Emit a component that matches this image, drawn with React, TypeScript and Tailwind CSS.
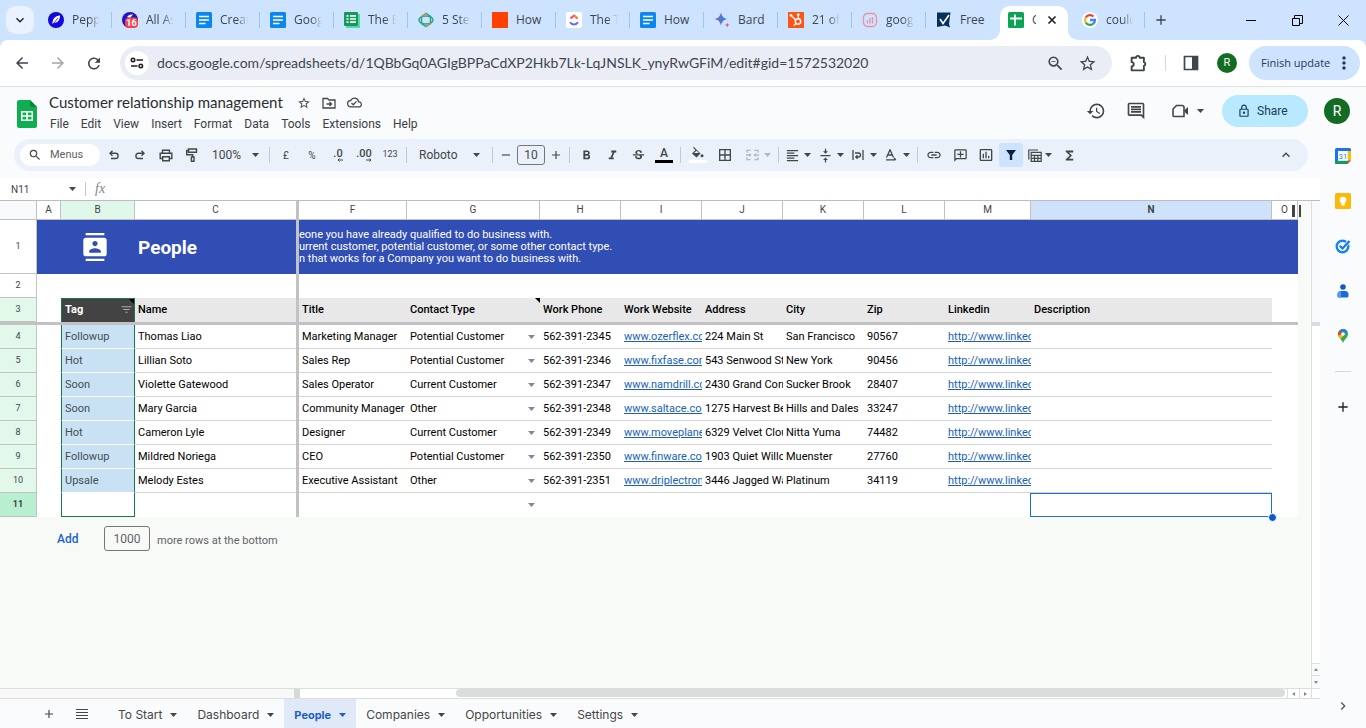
import React from "react";
import {
  MdAdd,
  MdArrowBack,
  MdArrowForward,
  MdBorderAll,
  MdChevronRight,
  MdContacts,
  MdFilterList,
  MdFormatAlignLeft,
  MdFormatBold,
  MdFormatItalic,
  MdFunctions,
  MdHistory,
  MdInsertChartOutlined,
  MdKeyboardArrowDown,
  MdKeyboardArrowUp,
  MdLink,
  MdMoreVert,
  MdOutlineAddComment,
  MdOutlineCloudDone,
  MdOutlineComment,
  MdOutlineLock,
  MdRefresh,
  MdRemove,
  MdSearch,
  MdStarBorder,
  MdStrikethroughS,
  MdVerticalAlignCenter,
  MdZoomOut,
} from "react-icons/md";

type Kids = { children?: React.ReactNode };

/* ---------- favicons ---------- */

const DocsIcon = () => (
  <svg viewBox="0 0 16 16" className="size-4 shrink-0">
    <rect width="16" height="16" rx="1.5" fill="#0b86f0" />
    <path d="M3 4.500h10M3 8h10M3 11.500h6.500" stroke="#fff" strokeWidth="1.600" />
  </svg>
);
const PepperIcon = () => (
  <svg viewBox="0 0 16 16" className="size-4 shrink-0">
    <circle cx="8" cy="8" r="8" fill="#1206e0" />
    <path d="M4.500 12.500C4.200 7 7 3.500 12 3.500 12.200 8 9.500 11 5.800 11L4.500 12.500z" fill="#fff" />
    <path d="M5 12 10 6" stroke="#1206e0" strokeWidth=".8" />
  </svg>
);
const AllIcon = () => (
  <svg viewBox="0 0 16 16" className="size-4 shrink-0">
    <circle cx="8" cy="8" r="8" fill="#2312c8" />
    <path d="M5 5C7 2.500 9 2.500 11 2.500L8 6z" fill="#fff" />
    <rect x="3" y="5.500" width="13" height="10.500" rx="4" fill="#f0454c" />
    <text x="9.500" y="14" fontSize="9" fontWeight="700" fill="#fff" textAnchor="middle" fontFamily="Roboto, sans-serif">16</text>
  </svg>
);
const TableIcon = () => (
  <svg viewBox="0 0 16 16" className="size-4 shrink-0">
    <rect x="2" y="2" width="14" height="14" fill="#4fdc9c" />
    <rect width="14" height="14" rx="1" fill="#149a5a" />
    <path d="M2.500 3.800h2M6 3.800h6M2.500 7h2M6 7h6M2.500 10.200h2M6 10.200h6" stroke="#fff" strokeWidth="1.700" />
  </svg>
);
const KnotIcon = () => (
  <svg viewBox="0 0 16 16" className="size-4 shrink-0" fill="none" strokeWidth="1.500">
    <ellipse cx="8" cy="8" rx="7" ry="4" stroke="#2ba58b" />
    <path d="M3.500 4.500 8 1.500l4.500 3v7L8 14.500l-4.500-3z" stroke="#2ba58b" />
    <path d="M3.500 4.500 8 1.500M12.500 11.500 8 14.500" stroke="#e58a3c" />
  </svg>
);
const OrangeIcon = () => (
  <svg viewBox="0 0 16 16" className="size-4 shrink-0"><rect width="16" height="16" fill="#ff4000" /></svg>
);
const ClickUpIcon = () => (
  <svg viewBox="0 0 16 16" className="size-4 shrink-0" fill="none">
    <rect width="16" height="16" rx="2" fill="#fff" />
    <path d="M4.500 6.500 8 3.500l3.500 3" stroke="#f0437f" strokeWidth="2" />
    <path d="M8 3.500l3.500 3" stroke="#fb8a2e" strokeWidth="2" />
    <path d="M4 10.200c2 3 6 3 8 0" stroke="#5c6cf5" strokeWidth="2" />
  </svg>
);
const BardIcon = () => (
  <svg viewBox="0 0 16 16" className="size-4 shrink-0">
    <path d="M7 .500C7.800 4.500 9.500 6.200 13.500 7 9.500 7.800 7.800 9.500 7 13.500 6.200 9.500 4.500 7.800.500 7 4.500 6.200 6.200 4.500 7 .500z" fill="#3c7fe0" />
    <path d="M7 .500V13.500C6.200 9.500 4.500 7.800.500 7 4.500 6.200 6.200 4.500 7 .500z" fill="#a35db0" opacity=".6" />
    <path d="M13.300 10.500c.3 1.700 1 2.300 2.700 2.600-1.700.3-2.400 1-2.700 2.700-.3-1.700-1-2.400-2.700-2.700 1.700-.3 2.400-.9 2.700-2.600z" fill="#d9618b" />
  </svg>
);
const HubIcon = () => (
  <svg viewBox="0 0 16 16" className="size-4 shrink-0" fill="none" stroke="#fff">
    <rect width="16" height="16" fill="#ff5416" stroke="none" />
    <circle cx="10" cy="9.500" r="2.700" strokeWidth="1.500" />
    <path d="M10.300 6.500V3M7.800 8 3 3.500M8 11.500l-2.200 2.200" strokeWidth="1.200" />
    <circle cx="10.300" cy="2.700" r="1" fill="#fff" />
    <circle cx="3" cy="3.300" r="1" fill="#fff" />
  </svg>
);
const StatIcon = () => (
  <svg viewBox="0 0 16 16" className="size-4 shrink-0" fill="none" stroke="#ec8fa8" strokeWidth="1.300">
    <rect x="1.500" y="1.500" width="13" height="13" rx="4" />
    <path d="M5.500 8v3.500M8 6v5.500M10.500 5v6.500" />
  </svg>
);
const CheckIcon = () => (
  <svg viewBox="0 0 16 16" className="size-4 shrink-0">
    <path d="M1 .500h13.500L13 12l1 3.500-5-2-8 1.500z" fill="#06305c" />
    <path d="m4 7 3 4.500L13 3" stroke="#fff" strokeWidth="1.600" fill="none" />
  </svg>
);
const SheetTabIcon = () => (
  <svg viewBox="0 0 16 16" className="size-4 shrink-0">
    <rect width="16" height="16" rx="1.500" fill="#0aa554" />
    <path d="M2 6.500h12M7 2.500v11" stroke="#fff" strokeWidth="1.800" />
  </svg>
);
const GoogleIcon = () => (
  <svg viewBox="0 0 16 16" className="size-4 shrink-0" fill="none" strokeWidth="2.300">
    <circle cx="8" cy="8" r="8" fill="#fff" />
    <path d="M11.500 4.500A5 5 0 0 0 3.700 5.500" stroke="#ea4335" />
    <path d="M3.700 5.500a5 5 0 0 0 0 5" stroke="#fbbc05" />
    <path d="M3.700 10.500a5 5 0 0 0 7.600 1.200" stroke="#34a853" />
    <path d="M11.300 11.700A5 5 0 0 0 13 8H8" stroke="#4285f4" />
  </svg>
);

const browserTabs: { label: string; icon: () => React.ReactElement; faded?: boolean }[] = [
  { label: "Pepp", icon: PepperIcon, faded: true },
  { label: "All As", icon: AllIcon, faded: true },
  { label: "Creat", icon: DocsIcon, faded: true },
  { label: "Goog", icon: DocsIcon, faded: true },
  { label: "The B", icon: TableIcon, faded: true },
  { label: "5 Ste", icon: KnotIcon, faded: true },
  { label: "How", icon: OrangeIcon },
  { label: "The T", icon: ClickUpIcon, faded: true },
  { label: "How", icon: DocsIcon },
  { label: "Bard", icon: BardIcon },
  { label: "21 of", icon: HubIcon, faded: true },
  { label: "goog", icon: StatIcon, faded: true },
  { label: "Free", icon: CheckIcon },
];

function BrowserTab({ label, icon: Icon, faded, last }: { label: string; icon: () => React.ReactElement; faded?: boolean; last?: boolean }) {
  return (
    <button className="flex h-10 w-[74px] shrink-0 items-center gap-2 pl-[10px]">
      <Icon />
      <span className={`w-7 overflow-hidden text-left whitespace-nowrap ${faded ? "[mask-image:linear-gradient(to_right,black_60%,transparent)]" : ""}`}>
        {label}
      </span>
      <span className={last ? "hidden" : "ml-auto h-4 w-px shrink-0 bg-[#9cc6f8]"} />
    </button>
  );
}

function BrowserChrome() {
  return (
    <header className="font-['Open_Sans',sans-serif] text-[#3c4650]">
      <div className="flex h-10 items-center bg-[#cee3fd] pl-[6px] text-xs">
        <button aria-label="Search tabs" className="mr-1 flex size-7 items-center justify-center rounded-[9px] bg-[#e9f2fe]">
          <MdKeyboardArrowDown className="size-4 text-[#1f1f1f]" />
        </button>
        {browserTabs.map((t, i) => (
          <BrowserTab key={i} {...t} last={i === browserTabs.length - 1} />
        ))}
        <div className="relative mt-[6px] flex h-[34px] w-[68px] shrink-0 items-center gap-2 rounded-t-[10px] bg-white pb-[6px] pl-2">
          <svg viewBox="0 0 10 10" className="absolute bottom-0 -left-[10px] size-[10px]"><path d="M10 0v10H0A10 10 0 0 0 10 0z" fill="#fff" /></svg>
          <svg viewBox="0 0 10 10" className="absolute -right-[10px] bottom-0 size-[10px]"><path d="M0 0v10h10A10 10 0 0 1 0 0z" fill="#fff" /></svg>
          <SheetTabIcon />
          <span className="w-1 overflow-hidden">C</span>
          <button aria-label="Close tab" className="ml-[2px] text-[#1f1f1f]">
            <svg viewBox="0 0 12 12" className="size-3" stroke="currentColor" strokeWidth="1.600"><path d="m2.500 2.500 7 7M9.500 2.500l-7 7" /></svg>
          </button>
        </div>
        <button className="flex h-10 w-[77px] shrink-0 items-center gap-2 pl-[14px]">
          <GoogleIcon />
          <span className="w-[27px] overflow-hidden text-left whitespace-nowrap [mask-image:linear-gradient(to_right,black_60%,transparent)]">could</span>
          <span className="ml-auto h-4 w-px shrink-0 bg-[#9cc6f8]" />
        </button>
        <button aria-label="New tab" className="ml-2"><MdAdd className="size-4" /></button>
        <div className="ml-auto flex items-center text-black">
          <button aria-label="Minimize" className="flex w-[46px] justify-center">
            <svg viewBox="0 0 10 10" className="size-[10px]"><path d="M0 5.500h10" stroke="currentColor" /></svg>
          </button>
          <button aria-label="Restore" className="flex w-[46px] justify-center">
            <svg viewBox="0 0 11 11" className="size-[11px]" fill="none" stroke="currentColor">
              <path d="M.500 3.500h7v7h-7zM2.500 3.500v-3h8v8h-3" />
            </svg>
          </button>
          <button aria-label="Close" className="flex w-[46px] justify-center">
            <svg viewBox="0 0 11 11" className="size-[11px]" stroke="currentColor"><path d="m.500.500 10 10M10.500.500l-10 10" /></svg>
          </button>
        </div>
      </div>
      <div className="bg-[#cee3fd]">
        <div className="flex h-[47px] items-center rounded-t-lg border-b border-[#dfe3e2] bg-white pr-[6px] pl-[13px]">
          <button aria-label="Back" className="flex w-[18px] justify-center"><MdArrowBack className="size-[18px]" /></button>
          <button aria-label="Forward" className="ml-[18px] flex w-[18px] justify-center text-[#a3a7ab]"><MdArrowForward className="size-[18px]" /></button>
          <button aria-label="Reload" className="ml-[18px] flex w-[18px] justify-center"><MdRefresh className="size-[19px]" /></button>
          <div className="ml-[17px] flex h-[34px] flex-1 items-center rounded-full bg-[#ebedf6] pr-[15px] pl-[5px]">
            <button aria-label="Site information" className="flex size-6 items-center justify-center rounded-full bg-white">
              <svg viewBox="0 0 14 12" className="h-3 w-[14px]" fill="none" stroke="#1f1f1f" strokeWidth="1.600">
                <circle cx="3" cy="3" r="1.700" /><path d="M6.500 3H13M1 9h6.500" /><circle cx="10.800" cy="9" r="1.700" />
              </svg>
            </button>
            <input
              aria-label="Address"
              className="ml-2 min-w-0 flex-1 bg-transparent font-[Lato,sans-serif] text-sm outline-none"
              defaultValue="docs.google.com/spreadsheets/d/1QBbGq0AGIgBPPaCdXP2Hkb7Lk-LqJNSLK_ynyRwGFiM/edit#gid=1572532020"
            />
            <button aria-label="Zoom"><MdZoomOut className="size-[19px]" /></button>
            <button aria-label="Bookmark" className="ml-[13px]"><MdStarBorder className="size-[19px]" /></button>
          </div>
          <button aria-label="Extensions" className="ml-[17px]">
            <svg viewBox="0 0 18 18" className="size-[19px]" fill="none" stroke="currentColor" strokeWidth="1.800" strokeLinejoin="round">
              <path d="M2.500 3.500h4.200a1.700 1.700 0 0 1 3.400 0h4v4.200a1.800 1.800 0 0 1 0 3.500v4.300H2.500v-3.800a2 2 0 0 0 0-4z" />
            </svg>
          </button>
          <span className="mx-[17px] h-4 w-px bg-[#c6dcf8]" />
          <button aria-label="Side panel">
            <svg viewBox="0 0 16 16" className="size-4"><path d="M1.500 1.500h13v13h-13z" fill="none" stroke="currentColor" strokeWidth="1.700" /><path d="M9 1.500h6v13H9z" fill="currentColor" /></svg>
          </button>
          <button className="mr-3 ml-[18px] flex size-5 items-center justify-center rounded-full bg-[#146c24] font-[Roboto,sans-serif] text-[11px] text-white">R</button>
          <button className="flex h-[34px] w-[111px] items-center justify-between rounded-full bg-[#cee3fd] pr-[6px] pl-3 text-[11px] whitespace-nowrap text-[#1c3a5c]">
            Finish update <MdMoreVert className="size-5" />
          </button>
        </div>
      </div>
    </header>
  );
}

/* ---------- document header ---------- */

const Caret = ({ className = "" }: { className?: string }) => (
  <svg viewBox="0 0 7 4" className={`h-1 w-[7px] shrink-0 ${className}`} fill="currentColor"><path d="M0 0h7L3.500 4z" /></svg>
);

function DocHeader() {
  return (
    <div className="flex h-[51px] items-start bg-[#f9fbfd] pr-4 pl-[17px] font-[Roboto,sans-serif]">
      <svg viewBox="0 0 20 28" className="mt-[13px] h-7 w-5">
        <path d="M2 0h11l7 7v19a2 2 0 0 1-2 2H2a2 2 0 0 1-2-2V2a2 2 0 0 1 2-2z" fill="#0eaf50" />
        <path d="m13 0 7 7h-5a2 2 0 0 1-2-2z" fill="#08873b" />
        <path d="M4 11h12v10H4zm1.500 1.500v2.700h3.700v-2.700zm5.300 0v2.700h3.700v-2.700zm-5.300 4.200v2.800h3.700v-2.800zm5.300 0v2.800h3.700v-2.800z" fill="#fff" fillRule="evenodd" />
      </svg>
      <div className="ml-3 pt-[5px]">
        <div className="flex h-[21px] items-center text-[#2a2d30]">
          <h1 className="font-[Lato,sans-serif] text-[15px]">Customer relationship management</h1>
          <div className="ml-[14px] flex items-center gap-[11px] text-[#444746]">
            <button aria-label="Star"><MdStarBorder className="size-[14px]" /></button>
            <button aria-label="Move">
              <svg viewBox="0 0 14 12" className="h-3 w-[14px]" fill="none" stroke="currentColor" strokeWidth="1.300">
                <path d="M1 1.500h4.500L7 3h6v8H1zM4.500 7h5M7.500 5l2 2-2 2" />
              </svg>
            </button>
            <button aria-label="Saved"><MdOutlineCloudDone className="size-[15px]" /></button>
          </div>
        </div>
        <nav className="flex h-[21px] items-center gap-3 pl-px text-xs text-[#3c4043]">
          {["File", "Edit", "View", "Insert", "Format", "Data", "Tools", "Extensions", "Help"].map((m) => (
            <button key={m}>{m}</button>
          ))}
        </nav>
      </div>
      <div className="ml-auto flex items-center pt-2 text-[#444746]">
        <button aria-label="History"><MdHistory className="size-5" /></button>
        <button aria-label="Comments" className="ml-5"><MdOutlineComment className="size-5" /></button>
        <button aria-label="Meet" className="ml-[26px] flex items-center gap-2">
          <svg viewBox="0 0 17 14" className="h-[14px] w-[17px]" fill="none" stroke="currentColor" strokeWidth="1.600">
            <path d="M4.500 1.500H10a2 2 0 0 1 2 2v9H2A1 1 0 0 1 1 11.500V5z" /><path d="M12.500 6 16 3v8l-3.500-3z" fill="currentColor" stroke="none" />
          </svg>
          <Caret />
        </button>
        <button className="ml-[18px] flex h-8 w-[86px] items-center gap-[6px] rounded-full bg-[#b9e9fe] pl-[15px] text-xs text-[#1b3c55]">
          <MdOutlineLock className="size-[14px]" /> Share
        </button>
        <button className="ml-4 flex size-[26px] items-center justify-center rounded-full bg-[#146c24] text-sm text-white">R</button>
      </div>
    </div>
  );
}

/* ---------- toolbar ---------- */

const Tool = ({ label, children, width = "w-[26px]", className = "" }: Kids & { label: string; width?: string; className?: string }) => (
  <button aria-label={label} title={label} className={`flex h-6 shrink-0 items-center justify-center ${width} ${className}`}>{children}</button>
);
const Combo = ({ label, children, width = "w-[33px] pl-[3px]", className = "" }: Kids & { label: string; width?: string; className?: string }) => (
  <button aria-label={label} title={label} className={`flex h-6 shrink-0 items-center justify-between pr-1 ${width} ${className}`}>{children}<Caret /></button>
);
const Sep = () => <span className="mx-[3px] h-4 w-px shrink-0 bg-[#c3c8ce]" />;

function Toolbar() {
  return (
    <div className="bg-[#f9fbfd] pr-3 pb-[7px] pl-[14px] font-[Roboto,sans-serif]">
      <div className="flex h-8 items-center rounded-full bg-[#eaf1fb] pr-[14px] pl-[6px] text-[#444746]">
        <label className="mr-px flex h-[22px] w-20 shrink-0 items-center gap-2 rounded-full bg-white pl-2">
          <MdSearch className="size-[14px]" />
          <input aria-label="Menus" placeholder="Menus" className="w-12 bg-transparent text-[11px] outline-none placeholder:text-[#5f6368]" />
        </label>
        <Tool label="Undo">
          <svg viewBox="0 0 10 10" className="size-[10px]" fill="none" stroke="currentColor" strokeWidth="1.400"><path d="M3.500.800 1 3.300l2.500 2.500M1 3.300h5.500a2.600 2.600 0 0 1 0 5.200H2" /></svg>
        </Tool>
        <Tool label="Redo">
          <svg viewBox="0 0 10 10" className="size-[10px]" fill="none" stroke="currentColor" strokeWidth="1.400"><path d="M6.500.800 9 3.300 6.500 5.800M9 3.300H3.500a2.600 2.600 0 0 0 0 5.200H8" /></svg>
        </Tool>
        <Tool label="Print">
          <svg viewBox="0 0 14 13" className="h-[13px] w-[14px]" fill="none" stroke="currentColor" strokeWidth="1.400"><path d="M3.500 4V1.200h7V4M3.500 9.500H1.200V4.200h11.600v5.300h-2.300M3.700 7.700h6.600v4H3.700z" /></svg>
        </Tool>
        <Tool label="Paint format">
          <svg viewBox="0 0 12 14" className="h-[14px] w-3" fill="none" stroke="currentColor" strokeWidth="1.400"><path d="M2.500 1h8v3.200h-8zM2.500 2.500H.7v4.300h6v2M5.400 9h2.600v4.200H5.400z" /></svg>
        </Tool>
        <label className="flex w-[61px] shrink-0 items-center pl-[7px]">
          <select aria-label="Zoom" className="w-10 appearance-none bg-transparent text-xs outline-none"><option>100%</option></select>
          <Caret />
        </label>
        <Sep />
        <Tool label="Currency"><span className="text-[10px]">£</span></Tool>
        <Tool label="Percent"><span className="text-[10px]">%</span></Tool>
        <Tool label="Decrease decimals">
          <span className="flex flex-col items-end text-[11px] leading-[9px] font-medium">.0
            <svg viewBox="0 0 6 4" className="h-1 w-[6px]" stroke="currentColor" fill="none"><path d="M6 2H1M2.500.500 1 2l1.500 1.500" /></svg>
          </span>
        </Tool>
        <Tool label="Increase decimals">
          <span className="flex flex-col items-end text-[11px] leading-[9px] font-medium">.00
            <svg viewBox="0 0 6 4" className="h-1 w-[6px]" stroke="currentColor" fill="none"><path d="M0 2h5M3.500.500 5 2 3.500 3.500" /></svg>
          </span>
        </Tool>
        <Tool label="More formats"><span className="text-[9px]">123</span></Tool>
        <Sep />
        <label className="flex w-[79px] shrink-0 items-center pl-[9px]">
          <select aria-label="Font" className="w-[54px] appearance-none bg-transparent text-xs outline-none"><option>Roboto</option></select>
          <Caret />
        </label>
        <Sep />
        <Tool label="Decrease font size" width="w-5"><MdRemove className="size-[14px]" /></Tool>
        <input aria-label="Font size" defaultValue="10" className="mx-px h-5 w-7 shrink-0 rounded-[3px] border border-[#747775] bg-transparent text-center text-xs outline-none" />
        <Tool label="Increase font size" width="w-5"><MdAdd className="size-[14px]" /></Tool>
        <Sep />
        <Tool label="Bold"><MdFormatBold className="size-[15px]" /></Tool>
        <Tool label="Italic"><MdFormatItalic className="size-[15px]" /></Tool>
        <Tool label="Strikethrough"><MdStrikethroughS className="size-[15px]" /></Tool>
        <Tool label="Text color"><span className="flex w-[18px] flex-col items-center text-xs leading-[13px] font-medium">A<span className="h-[3px] w-full bg-black" /></span></Tool>
        <Sep />
        <Tool label="Fill color" width="w-7">
          <svg viewBox="0 0 18 16" className="h-4 w-[18px]"><path d="m5 0 6.500 6.500L7.500 10.500 3 6.500 6.500 3 4 .8zM5 6h5L7.500 3.800z" fill="currentColor" fillRule="evenodd" /><circle cx="13" cy="8.800" r="1.500" fill="currentColor" /><path d="M0 13h18v3H0z" fill="#fff" /></svg>
        </Tool>
        <Tool label="Borders"><MdBorderAll className="size-4" /></Tool>
        <Combo label="Merge cells" width="w-[37px] pl-2" className="text-[#b4b9be]">
          <svg viewBox="0 0 14 12" className="h-3 w-[13px]" fill="none" stroke="currentColor" strokeWidth="1.400"><path d="M5 1H1v2.500M9 1h4v2.500M5 11H1V8.500M9 11h4V8.500M0 6h5M3.500 4.500 5 6 3.500 7.500M14 6H9M10.500 4.500 9 6l1.500 1.500" /></svg>
        </Combo>
        <Sep />
        <Combo label="Horizontal align"><MdFormatAlignLeft className="size-[15px]" /></Combo>
        <Combo label="Vertical align"><MdVerticalAlignCenter className="size-[15px]" /></Combo>
        <Combo label="Text wrapping">
          <svg viewBox="0 0 12 12" className="mx-px size-3" fill="none" stroke="currentColor" strokeWidth="1.300"><path d="M1 1v10M11 1v10M3 4h3.500a1.900 1.900 0 0 1 0 4H4M5.500 6.300 3.800 8l1.700 1.700" /></svg>
        </Combo>
        <Combo label="Text rotation">
          <svg viewBox="0 0 12 12" className="mx-px size-3" fill="none" stroke="currentColor" strokeWidth="1.300"><path d="M1.500 8.500 5 .8l3.500 7.700M2.800 6h4.400M1 10.800h9.500M9 9l1.800 1.800" /></svg>
        </Combo>
        <Sep />
        <Tool label="Insert link"><MdLink className="size-4" /></Tool>
        <Tool label="Insert comment"><MdOutlineAddComment className="size-[15px] -scale-x-100" /></Tool>
        <Tool label="Insert chart"><MdInsertChartOutlined className="size-4" /></Tool>
        <Tool label="Filter" width="w-6" className="rounded-[3px] bg-[#cee3fd]">
          <svg viewBox="0 0 10 10" className="size-[10px]"><path d="M0 0h10L6.200 5v5H3.800V5z" fill="#0b1f45" /></svg>
        </Tool>
        <Combo label="Filter views" width="w-[33px] pl-[5px]">
          <svg viewBox="0 0 14 13" className="h-[13px] w-[14px]" fill="none" stroke="currentColor" strokeWidth="1.200"><path d="M10 1H.8v9.500M3.200 3.300h10v9h-10zM3.200 6.300h10M3.200 9.300h10M6.500 6.300v6M9.900 6.300v6" /></svg>
        </Combo>
        <Tool label="Functions"><MdFunctions className="size-[15px]" /></Tool>
        <button aria-label="Hide menus" className="ml-auto"><MdKeyboardArrowUp className="size-4" /></button>
      </div>
    </div>
  );
}

function FormulaBar() {
  return (
    <div className="flex h-[22px] items-center bg-white pl-[11px] font-[Roboto,sans-serif] text-[#444746]">
      <input aria-label="Name box" defaultValue="N11" className="w-[58px] bg-transparent text-[10px] outline-none" />
      <Caret />
      <span className="ml-[9px] h-[14px] w-px bg-[#c7c7c7]" />
      <label className="flex flex-1 items-center pl-[9px]">
        <span className="font-['Liberation_Serif',serif] text-sm text-[#80868b] italic">fx</span>
        <input aria-label="Formula" className="ml-3 h-4 flex-1 bg-transparent text-xs outline-none" />
      </label>
    </div>
  );
}

/* ---------- grid ---------- */

type Person = [string, string, string, string, string, string, string, string, string];
const people: Person[] = [
  ["Followup", "Thomas Liao", "Marketing Manager", "Potential Customer", "562-391-2345", "www.ozerflex.co", "224 Main St", "San Francisco", "90567"],
  ["Hot", "Lillian Soto", "Sales Rep", "Potential Customer", "562-391-2346", "www.fixfase.com", "543 Senwood St", "New York", "90456"],
  ["Soon", "Violette Gatewood", "Sales Operator", "Current Customer", "562-391-2347", "www.namdrill.co", "2430 Grand Corr", "Sucker Brook", "28407"],
  ["Soon", "Mary Garcia", "Community Manager", "Other", "562-391-2348", "www.saltace.com", "1275 Harvest Be", "Hills and Dales", "33247"],
  ["Hot", "Cameron Lyle", "Designer", "Current Customer", "562-391-2349", "www.moveplane", "6329 Velvet Clou", "Nitta Yuma", "74482"],
  ["Followup", "Mildred Noriega", "CEO", "Potential Customer", "562-391-2350", "www.finware.com", "1903 Quiet Willo", "Muenster", "27760"],
  ["Upsale", "Melody Estes", "Executive Assistant", "Other", "562-391-2351", "www.driplectron", "3446 Jagged Wa", "Platinum", "34119"],
];

const RowHead = ({ n, tone = "bg-[#e2f8eb]" }: { n: number; tone?: string }) => (
  <th scope="row" className={`border-r border-b border-[#c0c4c2] text-center text-[9px] text-[#444] ${tone} ${n === 11 ? "font-bold" : "font-normal"}`}>{n}</th>
);
const Bar = () => <td className="bg-[#c2c2c2]" />;
const Cell = ({ children, className = "" }: Kids & { className?: string }) => (
  <td className={`overflow-hidden border-b border-[#d4d4d4] pl-[3px] whitespace-nowrap ${className}`}>{children}</td>
);
const ColHead = ({ children, className = "" }: Kids & { className?: string }) => (
  <th scope="col" className={`border-b border-[#c0c0c0] text-[10px] leading-none text-[#444] ${className}`}>{children}</th>
);
const Arrow = () => <button aria-label="Choose contact type" className="mr-[5px] text-[#85898c]"><Caret /></button>;
const Link = ({ children }: Kids) => <a href="#" className="text-[#1a5fb8] underline">{children}</a>;
const Note = () => (
  <svg viewBox="0 0 5 5" className="absolute top-0 right-0 size-[5px]"><path d="M0 0h5v5z" fill="#000" /></svg>
);

function Grid() {
  return (
    <table className="w-full table-fixed border-separate border-spacing-0 bg-white font-[Roboto,sans-serif] text-[11px] leading-[13px] text-black">
      <colgroup>
        <col className="w-[37px]" /><col className="w-6" /><col className="w-[74px]" /><col className="w-[161px]" /><col className="w-[3px]" />
        <col className="w-[108px]" /><col className="w-[133px]" /><col className="w-[81px]" /><col className="w-[81px]" /><col className="w-[81px]" />
        <col className="w-[81px]" /><col className="w-[81px]" /><col className="w-[86px]" /><col /><col className="w-[26px]" />
      </colgroup>
      <thead>
        <tr className="h-[19px]">
          <ColHead className="border-r bg-[#f8f9fa]" />
          <ColHead className="border-r font-normal">A</ColHead>
          <ColHead className="border-r bg-[#e0f8e9] font-normal">B</ColHead>
          <ColHead className="font-normal">C</ColHead>
          <Bar />
          {["F", "G", "H", "I", "J", "K", "L", "M"].map((c) => <ColHead key={c} className="border-r font-normal">{c}</ColHead>)}
          <ColHead className="border-r bg-[#cee3fb] font-bold">N</ColHead>
          <ColHead className="relative border-r font-normal">
            O
            <span className="absolute top-1 right-[2px] h-3 w-[3px] bg-[#444]" />
            <span className="absolute top-1 -right-[4px] h-3 w-[2px] bg-[#444]" />
          </ColHead>
        </tr>
      </thead>
      <tbody>
        <tr className="h-[54px] text-white">
          <RowHead n={1} tone="bg-white" />
          <td className="bg-[#314eb5]" />
          <td className="bg-[#314eb5]"><MdContacts className="ml-5 size-7" /></td>
          <td className="bg-[#314eb5] pl-[3px] text-[19px] font-bold">People</td>
          <Bar />
          <td colSpan={10} className="overflow-hidden bg-[#314eb5] leading-[12px] whitespace-nowrap">
            <p>eone you have already qualified to do business with.</p>
            <p>urrent customer, potential customer, or some other contact type.</p>
            <p>n that works for a Company you want to do business with.</p>
          </td>
        </tr>
        <tr className="h-6">
          <RowHead n={2} tone="bg-white" />
          <td /><td /><td /><Bar /><td colSpan={10} />
        </tr>
        <tr className="h-6 bg-[#e8e8e8] text-left font-medium [&>td]:pb-[2px]">
          <RowHead n={3} />
          <td className="bg-white" />
          <td className="relative border border-b-0 border-[#16794c] bg-[#434343] pl-[3px] font-bold text-white">
            <Note />
            <span className="flex items-center justify-between">Tag <MdFilterList className="mr-px size-[13px] text-[#a9adaf]" /></span>
          </td>
          <td className="pl-[3px]">Name</td>
          <Bar />
          <td className="pl-[3px]">Title</td>
          <td className="relative pl-[3px]">Contact Type<Note /></td>
          {["Work Phone", "Work Website", "Address", "City", "Zip", "Linkedin", "Description"].map((h) => (
            <td key={h} className="pl-[3px] whitespace-nowrap">{h}</td>
          ))}
          <td className="bg-white" />
        </tr>
        <tr className="h-[3px]"><td colSpan={15} className="bg-[#c2c2c2]" /></tr>
        {people.map((p, i) => (
          <tr key={p[1]} className="h-6">
            <RowHead n={i + 4} />
            <td />
            <td className="border-x border-b border-x-[#16794c] border-b-white bg-[#c8e2f3] pl-[3px] text-[#434f57]">{p[0]}</td>
            <Cell>{p[1]}</Cell>
            <Bar />
            <Cell>{p[2]}</Cell>
            <Cell><span className="flex items-center justify-between">{p[3]}<Arrow /></span></Cell>
            <Cell>{p[4]}</Cell>
            <Cell><Link>{p[5]}</Link></Cell>
            <Cell>{p[6]}</Cell>
            <Cell>{p[7]}</Cell>
            <Cell>{p[8]}</Cell>
            <Cell><Link>http://www.linked</Link></Cell>
            <Cell />
            <td />
          </tr>
        ))}
        <tr className="h-6">
          <RowHead n={11} tone="bg-[#b8efd0]" />
          <td />
          <td className="border border-t-0 border-[#16794c]" />
          <td />
          <Bar />
          <td />
          <td><span className="flex justify-end"><Arrow /></span></td>
          <td colSpan={6} />
          <td className="relative">
            <span className="absolute inset-y-0 right-0 -left-px border border-[#1a73c4]" />
            <span className="absolute -right-[5px] -bottom-[5px] size-[9px] rounded-full border border-white bg-[#0b57d0]" />
          </td>
          <td />
        </tr>
      </tbody>
    </table>
  );
}

const sheetTabs = ["To Start", "Dashboard", "People", "Companies", "Opportunities", "Settings"];

function SidePanel() {
  return (
    <aside className="flex w-[46px] shrink-0 flex-col items-center bg-[#f9fbfd] pt-[9px] pb-[14px] text-[#1f1f1f]">
      <div className="flex flex-col gap-[29px]">
        <button aria-label="Calendar" className="h-4">
          <svg viewBox="0 0 16 16" className="size-4">
            <rect width="16" height="16" rx="1.500" fill="#1a73e8" /><path d="M12.500 3H16v10h-3.500z" fill="#fbbc04" /><path d="M0 12.500h12.500V16H1.500A1.500 1.500 0 0 1 0 14.500z" fill="#0f9d58" /><path d="M12.500 12.500H16L12.500 16z" fill="#ea4335" /><path d="M16 12.600V16h-3.400z" fill="#f9fbfd" />
            <rect x="3" y="3" width="9.800" height="9.800" fill="#fff" />
            <text x="8" y="10.700" fontSize="7.500" fill="#1a73e8" textAnchor="middle" fontFamily="Roboto, sans-serif">31</text>
          </svg>
        </button>
        <button aria-label="Keep" className="h-4">
          <svg viewBox="0 0 16 16" className="size-4"><rect width="16" height="16" rx="1.500" fill="#fbb90a" /><circle cx="8" cy="7" r="3.300" fill="#fff" /><path d="M6.300 9h3.400v3.500H6.300z" fill="#fff" /></svg>
        </button>
        <button aria-label="Tasks" className="h-4">
          <svg viewBox="0 0 16 16" className="size-4" fill="none"><circle cx="7.500" cy="8.500" r="5.800" stroke="#1482fa" strokeWidth="2.400" /><path d="m4.800 8 2.500 2.500L14.500 3" stroke="#f9fbfd" strokeWidth="3.600" /><path d="m4.800 7.800 2.700 2.700L14.500 3" stroke="#1674ea" strokeWidth="2.200" /></svg>
        </button>
        <button aria-label="Contacts" className="h-4">
          <svg viewBox="0 0 16 16" className="size-4"><circle cx="8" cy="4" r="2.800" fill="#1558c8" /><path d="M2.500 11.500A3.500 3.500 0 0 1 6 8h4a3.500 3.500 0 0 1 3.500 3.500V13a1.500 1.500 0 0 1-1.500 1.500H4A1.500 1.500 0 0 1 2.500 13z" fill="#1c68da" /><path d="M2.500 11.500A3.500 3.500 0 0 1 6 8v6.500H4A1.500 1.500 0 0 1 2.500 13z" fill="#5698f2" /></svg>
        </button>
        <button aria-label="Maps" className="h-4">
          <svg viewBox="0 0 16 16" className="size-4">
            <path d="M8 1a5 5 0 0 1 5 5c0 4-3.800 5-5 9-1.200-4-5-5-5-9a5 5 0 0 1 5-5z" fill="#34a853" />
            <path d="M8 1a5 5 0 0 1 4.700 3.400L8 6 4.300 2.700A5 5 0 0 1 8 1z" fill="#2a7de8" />
            <path d="M4.300 2.700A5 5 0 0 0 3 6c0 .5 0 1 .2 1.500L8 6z" fill="#ea4335" />
            <path d="M3.200 7.500C3.700 9.200 4.700 10 5.700 11L9 7 8 6z" fill="#fbbc04" />
            <circle cx="8" cy="6" r="1.800" fill="#fff" />
          </svg>
        </button>
      </div>
      <span className="mt-[27px] h-px w-4 bg-[#d5d8db]" />
      <button aria-label="Get add-ons" className="mt-[27px]"><MdAdd className="size-4" /></button>
      <button aria-label="Hide side panel" className="mt-auto"><MdChevronRight className="size-4 text-[#555]" /></button>
    </aside>
  );
}

export default function App() {
  return (
    <div className="flex h-screen min-w-[1200px] flex-col overflow-hidden bg-[#f9fbfd]">
      <BrowserChrome />
      <DocHeader />
      <div className="flex min-h-0 flex-1 pt-px">
        <main className="flex min-w-0 flex-1 flex-col">
          <Toolbar />
          <FormulaBar />
          <div className="flex min-h-0 flex-1 border-t border-[#bdbdbd]">
            <div className="min-w-0 flex-1 overflow-hidden bg-[#f8faf7]">
              <div className="pr-[13px]"><Grid /></div>
              <form className="flex items-center pt-[9px] pl-[57px] font-[Roboto,sans-serif] text-xs text-[#5f6368]">
                <button type="button" className="w-[47px] text-left font-medium text-[#1a63d2]">Add</button>
                <input aria-label="Rows to add" defaultValue="1000" className="h-[25px] w-[46px] rounded-[3px] border border-[#747775] bg-transparent text-center text-xs outline-none" />
                <span className="self-end pl-[7px] text-[11px] leading-5">more rows at the bottom</span>
              </form>
            </div>
            <div className="flex w-[9px] shrink-0 flex-col border-l border-[#dcdedd] bg-white">
              <div className="h-[125px] border-b-4 border-[#d9dbe4] bg-[#f8f9fa]" />
              <div className="mt-auto flex h-3 items-center justify-center border-t border-[#dcdedd] bg-[#f9fafa] text-[#85898c]"><svg viewBox="0 0 4 3" className="h-[3px] w-1"><path d="M0 3h4L2 0z" fill="currentColor" /></svg></div>
              <div className="flex h-[13px] items-center justify-center border-t border-[#dcdedd] bg-[#f9fafa] text-[#85898c]"><svg viewBox="0 0 4 3" className="h-[3px] w-1"><path d="M0 0h4L2 3z" fill="currentColor" /></svg></div>
            </div>
          </div>
          <div className="flex h-[11px] shrink-0 border-y border-[#dcdedd] bg-white">
            <div className="w-[294px] shrink-0 bg-[#f8f8f8]" />
            <div className="w-[6px] shrink-0 bg-[#d5d9d8]" />
            <div className="flex-1 pr-[2px] pl-[156px]"><div className="h-2 rounded-full bg-[#dadddc]" /></div>
            <div className="flex w-3 items-center justify-center border-l border-[#dcdedd] text-[#85898c]"><svg viewBox="0 0 3 4" className="h-1 w-[3px]"><path d="M3 0v4L0 2z" fill="currentColor" /></svg></div>
            <div className="flex w-3 items-center justify-center border-l border-[#dcdedd] text-[#85898c]"><svg viewBox="0 0 3 4" className="h-1 w-[3px]"><path d="M0 0v4l3-2z" fill="currentColor" /></svg></div>
            <div className="w-[9px] border-l border-[#dcdedd]" />
          </div>
          <footer className="flex h-[29px] shrink-0 items-stretch pl-[42px] font-[Inter,sans-serif] text-xs text-[#444746]">
            <button aria-label="Add sheet"><MdAdd className="size-[14px]" /></button>
            <button aria-label="All sheets" className="mr-[20px] ml-5">
              <svg viewBox="0 0 12 10" className="h-[10px] w-3"><path d="M0 .500h12M0 3.500h12M0 6.500h12M0 9.500h12" stroke="currentColor" /></svg>
            </button>
            {sheetTabs.map((s) => (
              <button
                key={s}
                className={`flex items-center gap-2 px-[10px] pt-[3px] ${s === "People" ? "bg-[#dfe9f7] text-[11px] font-bold text-[#1a5fc8]" : ""}`}
              >
                {s}<Caret />
              </button>
            ))}
          </footer>
        </main>
        <SidePanel />
      </div>
    </div>
  );
}
